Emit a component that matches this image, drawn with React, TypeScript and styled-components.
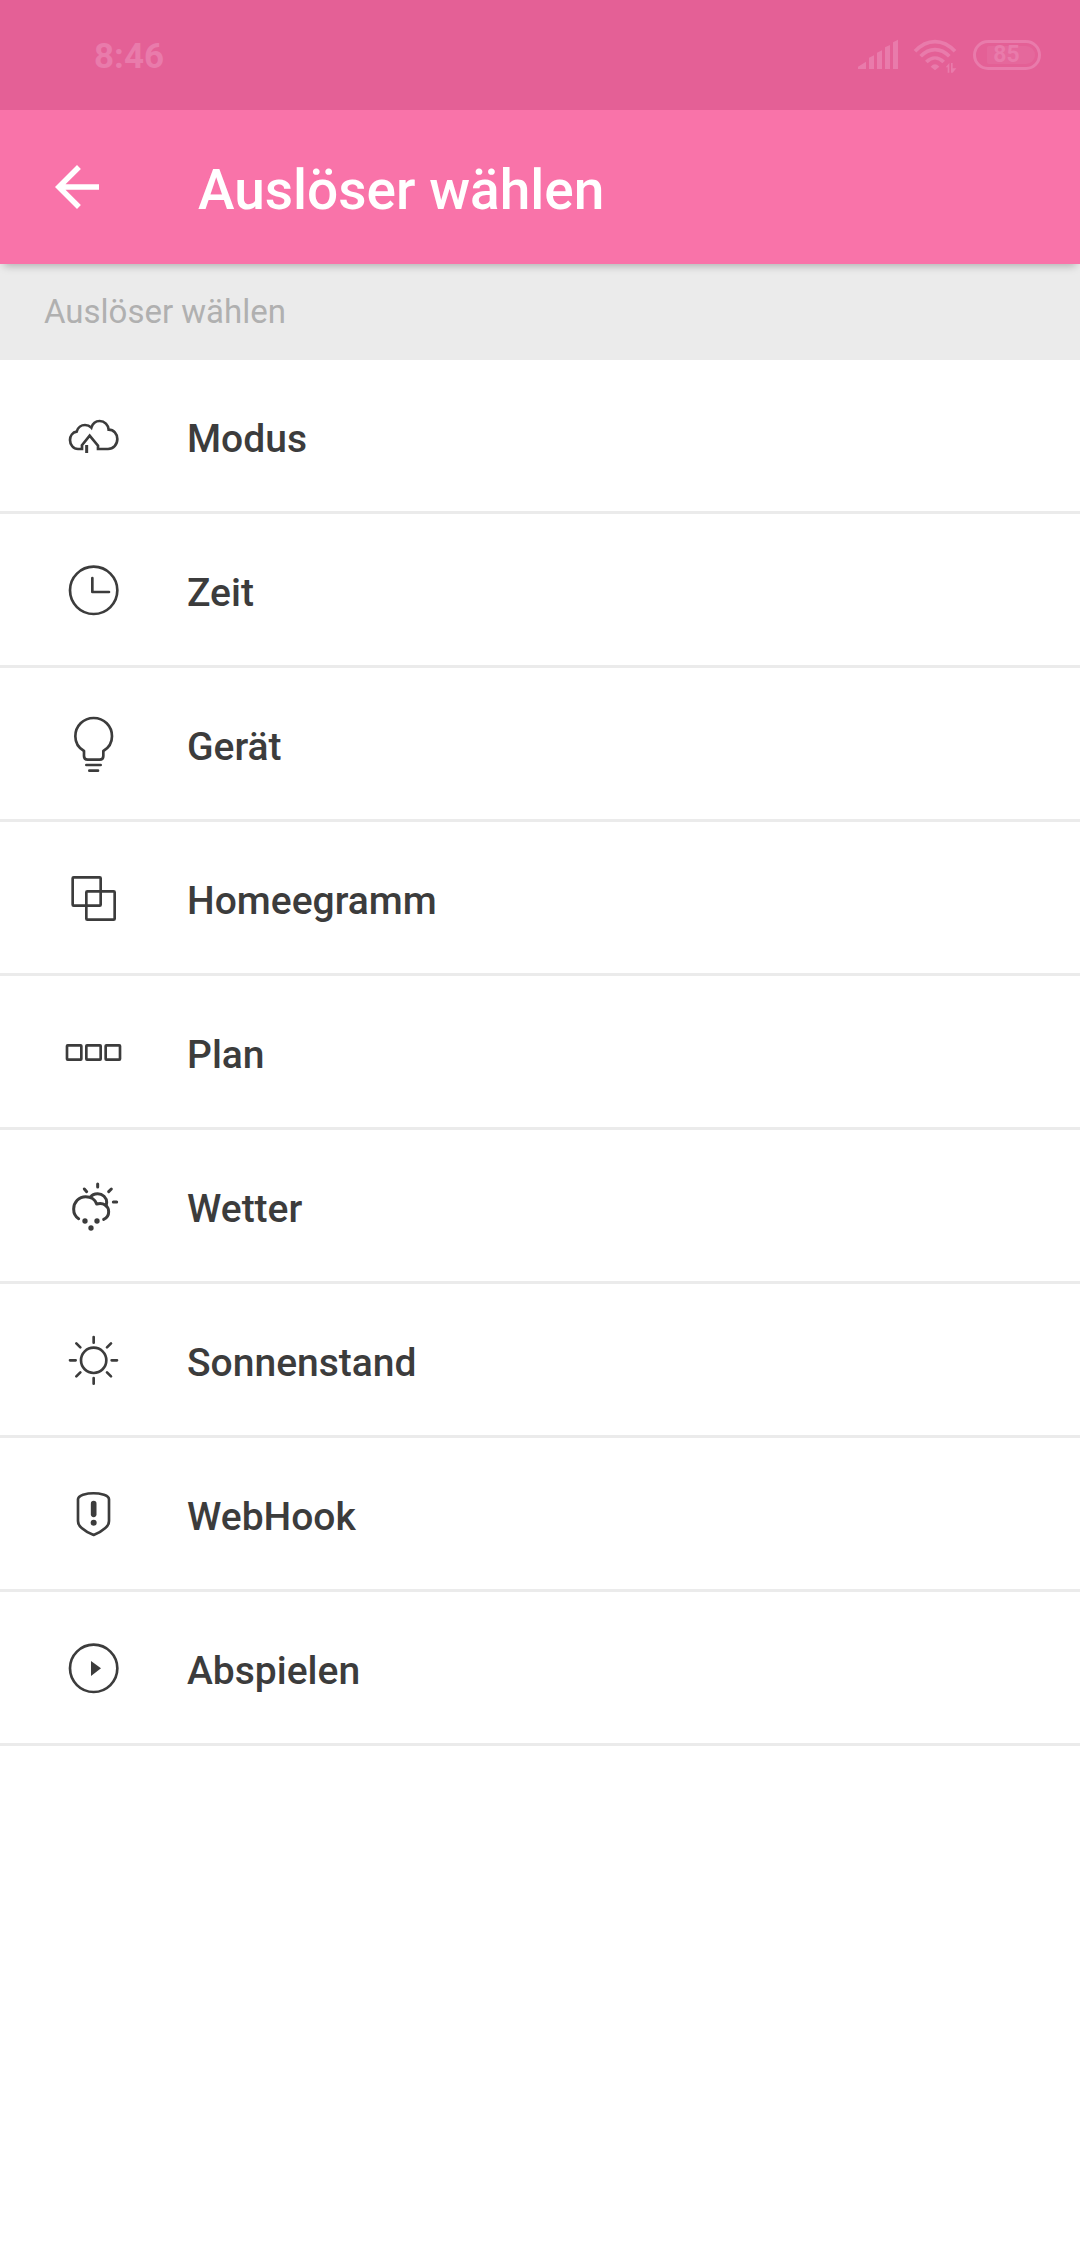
import React from 'react';
import styled, { createGlobalStyle } from 'styled-components';

const GlobalStyle = createGlobalStyle`
  * { box-sizing: border-box; }
  body { margin: 0; background: #fff; font-family: Roboto, "Noto Sans", sans-serif; }
`;

const ink = '#3c3c3c';

const StatusBar = styled.div`
  display: flex;
  align-items: center;
  justify-content: space-between;
  height: 110px;
  padding: 0 39px 0 94px;
  background: #e46096;
  color: #e97bab;
`;

const Clock = styled.span`
  padding-top: 4px;
  font-size: 35px;
  line-height: 40px;
  font-weight: 700;
`;

const StatusGroup = styled.div`
  display: flex;
  align-items: center;
  gap: 15px;
`;

const SignalIcon = styled.svg`
  display: block;
  width: 100px;
  height: 40px;
`;

const Battery = styled.span`
  display: flex;
  align-items: center;
  justify-content: center;
  width: 68px;
  height: 30px;
  border: 3px solid #e97bab;
  border-radius: 15px;
  font-size: 23px;
  font-weight: 700;
`;

const BatteryLevel = styled.span`
  width: 48px;
  height: 18px;
  margin-left: 8px;
  padding-right: 9px;
  border-radius: 2px 9px 9px 2px;
  background: #e5689c;
  line-height: 18px;
  text-align: center;
`;

const AppBar = styled.header`
  position: relative;
  display: flex;
  align-items: center;
  gap: 88px;
  height: 154px;
  padding: 0 44px;
  background: #f973a9;
  color: #fff;
  box-shadow: 0 6px 8px -4px rgba(0, 0, 0, 0.25);
`;

const BackButton = styled.button`
  flex: none;
  width: 66px;
  height: 66px;
  padding: 0;
  border: 0;
  background: none;
  color: inherit;
  cursor: pointer;

  svg { display: block; width: 100%; height: 100%; }
`;

const Title = styled.h1`
  margin: 0;
  padding-top: 6px;
  font-size: 55px;
  line-height: 64px;
  font-weight: 500;
`;

const SectionTitle = styled.h2`
  display: flex;
  align-items: center;
  height: 96px;
  margin: 0;
  padding: 0 44px;
  background: #ebebeb;
  color: #b0b0b0;
  font-size: 33px;
  line-height: 40px;
  font-weight: 400;
`;

const TriggerList = styled.ul`
  margin: 0;
  padding: 0;
  list-style: none;
`;

const TriggerButton = styled.button`
  display: flex;
  align-items: center;
  gap: 63px;
  width: 100%;
  height: 154px;
  padding: 3px 64px 0;
  border: 0;
  border-bottom: 3px solid #ebebeb;
  background: #fff;
  color: ${ink};
  font-family: inherit;
  text-align: left;
  cursor: pointer;
`;

const TriggerIcon = styled.svg`
  flex: none;
  width: 60px;
  height: 60px;
  fill: none;
  stroke: ${ink};
  stroke-width: 8;
  stroke-linecap: round;
  stroke-linejoin: round;
`;

const TriggerLabel = styled.span`
  padding-top: 4px;
  font-size: 39px;
  line-height: 48px;
  font-weight: 500;
`;

interface Trigger {
  label: string;
  top: number;
  icon: React.ReactNode;
}

const triggers: Trigger[] = [
  {
    label: 'Modus',
    top: 21,
    icon: (
      <g strokeLinecap="butt" strokeLinejoin="miter">
        <path d="M96 136V147H84C70 147 60 134 60 120C60 107 68 97 80 95C83 82 94 75 105 75C112 75 118 77 124 83C128 70 138 63 149 63C164 63 175 75 176 89C191 89 202 102 202 117C202 134 190 147 174 147H144V137L119 107L94 138" />
        <path d="M110 135V159" strokeWidth="9" />
      </g>
    ),
  },
  {
    label: 'Zeit',
    top: 33,
    icon: (
      <>
        <circle cx="131" cy="121" r="71" />
        <path d="M127 84V126H177" />
      </>
    ),
  },
  {
    label: 'Gerät',
    top: 45,
    icon: (
      <>
        <path d="M102 153C84 143 76 126 76 109C76 78 100 54 131 54C162 54 186 78 186 109C186 126 178 143 160 153V168Q160 179 149 179H113Q102 179 102 168Z" />
        <path d="M109 195H152M118 212H144" />
      </>
    ),
  },
  {
    label: 'Homeegramm',
    top: 27,
    icon: (
      <>
        <rect x="68" y="52" width="84" height="85" rx="3" />
        <rect x="109" y="94" width="85" height="85" rx="3" />
      </>
    ),
  },
  {
    label: 'Plan',
    top: 9,
    icon: (
      <>
        <rect x="51" y="76" width="43" height="43" rx="2" />
        <rect x="109" y="76" width="43" height="43" rx="2" />
        <rect x="167" y="76" width="43" height="43" rx="2" />
      </>
    ),
  },
  {
    label: 'Wetter',
    top: 21,
    icon: (
      <g strokeWidth="9">
        <path d="M86 146C76 140 71 129 71 117C71 97 87 80 107 80C123 80 136 89 140 102C160 96 176 108 176 125C176 136 170 144 161 148" />
        <path d="M122 81C126 74 134 71 143 71C158 71 170 83 170 97C170 101 169 104 168 107" />
        <path d="M143 42V51M103 57L110 65M184 57L176 65M190 96H200" />
        <g fill={ink} stroke="none">
          <circle cx="105" cy="153" r="8" />
          <circle cx="141" cy="153" r="8" />
          <circle cx="123" cy="174" r="8" />
        </g>
      </g>
    ),
  },
  {
    label: 'Sonnenstand',
    top: 33,
    icon: (
      <>
        <circle cx="131" cy="121" r="38" />
        <path d="M131 51V68M131 174V191M60 121H77M185 121H201M79 70L91 82M183 70L171 82M79 169L91 157M183 169L171 157" />
      </>
    ),
  },
  {
    label: 'WebHook',
    top: 15,
    icon: (
      <>
        <path d="M84 58C84 51 91 47 99 44C118 39 143 39 162 44C171 47 177 51 177 58V123C177 132 173 138 166 144C155 154 144 160 131 165C118 160 106 154 95 144C88 138 84 132 84 123Z" />
        <path d="M131 71V103" strokeWidth="17" />
        <circle cx="131" cy="128" r="9" fill={ink} stroke="none" />
      </>
    ),
  },
  {
    label: 'Abspielen',
    top: 27,
    icon: (
      <>
        <circle cx="131" cy="115" r="71" />
        <path d="M123 93L153 115L123 138Z" fill={ink} stroke="none" />
      </>
    ),
  },
];

export default function App() {
  return (
    <>
      <GlobalStyle />
      <StatusBar>
        <Clock>8:46</Clock>
        <StatusGroup>
          <SignalIcon viewBox="57 45 300 120" fill="currentColor" aria-hidden="true">
            <path d="M57 147V140L81 125V147ZM90 147V113L105 106V147ZM114 147V98L129 91V147ZM138 147V82L153 75V147ZM162 147V67L177 59V147Z" />
            <g fill="none" stroke="currentColor" strokeWidth="11">
              <path d="M228 94C264 55 312 55 348 94" />
              <path d="M245 109C271 82 305 82 331 109" />
              <path d="M262 126C278 110 298 110 314 126" />
            </g>
            <path d="M275 140Q288 126 301 140L288 151ZM320 142L331 129V158H326V142ZM336 129H341V145H352L341 158H336Z" />
          </SignalIcon>
          <Battery>
            <BatteryLevel>85</BatteryLevel>
          </Battery>
        </StatusGroup>
      </StatusBar>
      <AppBar>
        <BackButton type="button" aria-label="Zurück">
          <svg viewBox="0 0 24 24" fill="currentColor" aria-hidden="true">
            <path d="M20 11H7.83l5.59-5.59L12 4l-8 8 8 8 1.41-1.41L7.83 13H20v-2z" />
          </svg>
        </BackButton>
        <Title>Auslöser wählen</Title>
      </AppBar>
      <main>
        <SectionTitle>Auslöser wählen</SectionTitle>
        <TriggerList>
          {triggers.map(({ label, top, icon }) => (
            <li key={label}>
              <TriggerButton type="button">
                <TriggerIcon viewBox={`42 ${top} 180 180`} aria-hidden="true">
                  {icon}
                </TriggerIcon>
                <TriggerLabel>{label}</TriggerLabel>
              </TriggerButton>
            </li>
          ))}
        </TriggerList>
      </main>
    </>
  );
}
